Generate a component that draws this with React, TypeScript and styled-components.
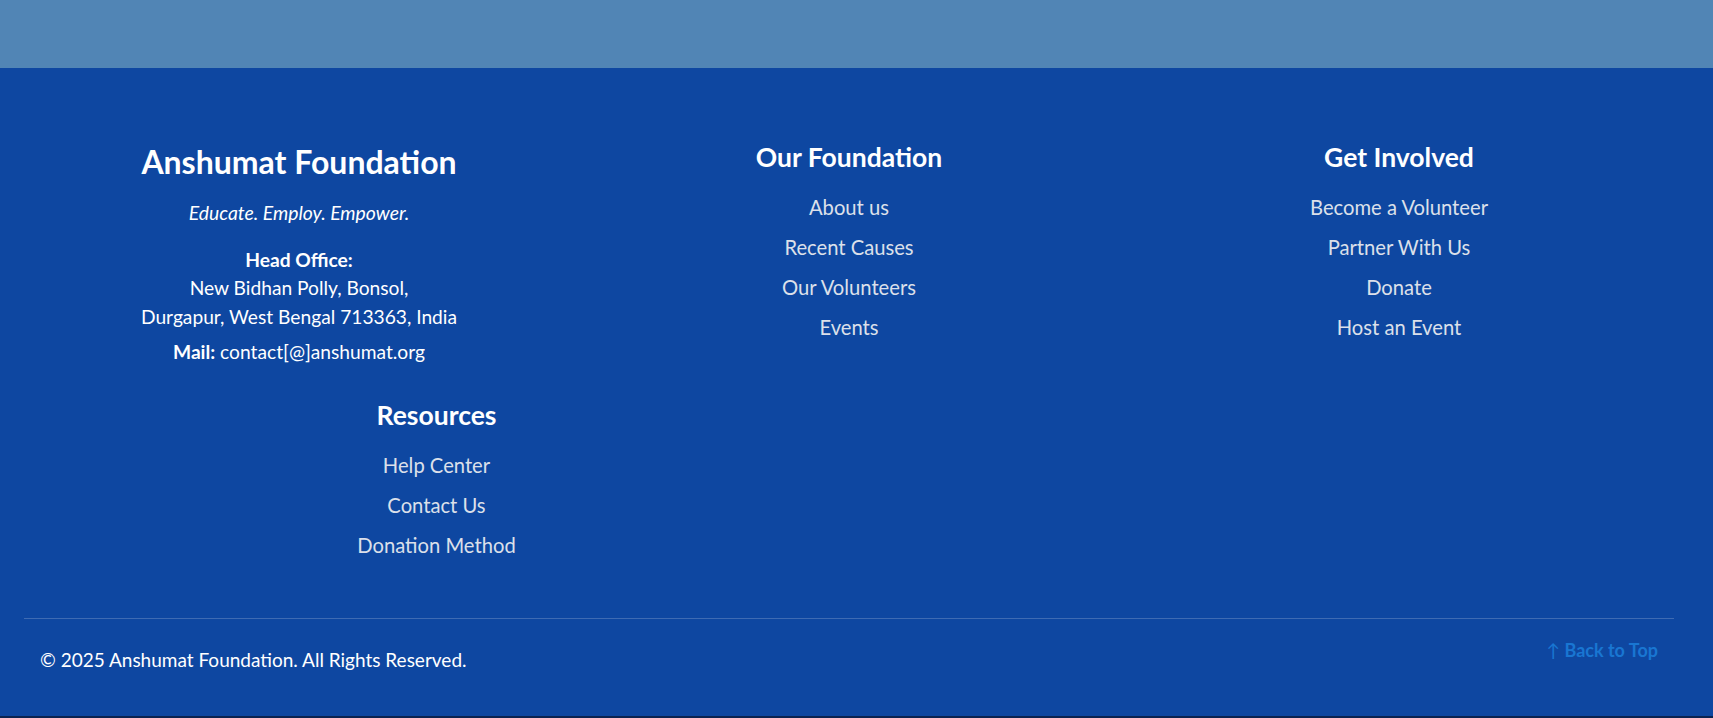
import React from 'react';
import styled, { createGlobalStyle } from 'styled-components';

const Global = createGlobalStyle`
  html, body { margin: 0; padding: 0; background: #0a2351; }
  body { font-family: Lato, "Liberation Sans", sans-serif; }
  * { box-sizing: border-box; }
`;

const Band = styled.div`
  height: 68px;
  background: #5185b5;
`;

const Footer = styled.footer`
  background: #0e47a1;
  color: #ffffff;
  padding: 73.8px 39px 43.4px 24px;
`;

const TopRow = styled.div`
  display: grid;
  grid-template-columns: 1fr 1fr 1fr;
  align-items: start;
`;

const SecondRow = styled.div`
  display: grid;
  grid-template-columns: 1fr 1fr;
  margin-top: 33.4px;
`;

const BrandCol = styled.div`
  display: flex;
  flex-direction: column;
  align-items: center;
  text-align: center;
`;

const BrandTitle = styled.h2`
  margin: 1.6px 0 0;
  font-size: 32px;
  font-weight: 700;
  line-height: 1.2;
`;

const Tagline = styled.p`
  margin: 17.2px 0 0;
  font-size: 19.4px;
  font-style: italic;
  line-height: 27px;
`;

const InfoText = styled.p<{ $gap: number }>`
  margin: ${(p) => p.$gap}px 0 0;
  font-size: 19.2px;
  line-height: 28.5px;
`;

const LinkCol = styled.div`
  display: flex;
  flex-direction: column;
  align-items: center;
  text-align: center;
`;

const ColTitle = styled.h3`
  margin: 0;
  font-size: 26.5px;
  font-weight: 700;
  line-height: 1.2;
`;

const LinkList = styled.ul`
  list-style: none;
  margin: 21.7px 0 0;
  padding: 0;
  display: flex;
  flex-direction: column;
  align-items: center;
  gap: 16px;
`;

const LinkItem = styled.a`
  display: block;
  font-size: 20.2px;
  line-height: 24px;
  color: #dce0ea;
  text-decoration: none;
`;

const Divider = styled.hr`
  margin: 60.7px 0 0;
  border: 0;
  border-top: 1px solid rgba(255, 255, 255, 0.2);
`;

const BottomBar = styled.div`
  display: flex;
  justify-content: space-between;
  align-items: flex-start;
  padding: 0 16px;
`;

const Copyright = styled.p`
  margin: 26.6px 0 0;
  font-size: 19px;
  line-height: 27px;
`;

const BackToTop = styled.a`
  margin-top: 18.5px;
  font-size: 18px;
  font-weight: 700;
  line-height: 27px;
  color: #1976d2;
  text-decoration: none;
`;

const Arrow = styled.span`
  font-weight: 400;
`;

type Section = { title: string; links: string[] };

const foundation: Section = {
  title: 'Our Foundation',
  links: ['About us', 'Recent Causes', 'Our Volunteers', 'Events'],
};
const involved: Section = {
  title: 'Get Involved',
  links: ['Become a Volunteer', 'Partner With Us', 'Donate', 'Host an Event'],
};
const resources: Section = {
  title: 'Resources',
  links: ['Help Center', 'Contact Us', 'Donation Method'],
};

function LinkSection({ section }: { section: Section }) {
  return (
    <LinkCol>
      <ColTitle>{section.title}</ColTitle>
      <LinkList>
        {section.links.map((l) => (
          <li key={l}>
            <LinkItem href="#">{l}</LinkItem>
          </li>
        ))}
      </LinkList>
    </LinkCol>
  );
}

export default function App() {
  return (
    <>
      <Global />
      <Band />
      <Footer>
        <TopRow>
          <BrandCol>
            <BrandTitle>Anshumat Foundation</BrandTitle>
            <Tagline>Educate. Employ. Empower.</Tagline>
            <InfoText $gap={19.9}>
              <strong>Head Office:</strong>
              <br />
              New Bidhan Polly, Bonsol,
              <br />
              Durgapur, West Bengal 713363, India
            </InfoText>
            <InfoText $gap={6.5}>
              <strong>Mail:</strong> contact[@]anshumat.org
            </InfoText>
          </BrandCol>
          <LinkSection section={foundation} />
          <LinkSection section={involved} />
        </TopRow>
        <SecondRow>
          <LinkSection section={resources} />
        </SecondRow>
        <Divider />
        <BottomBar>
          <Copyright>© 2025 Anshumat Foundation. All Rights Reserved.</Copyright>
          <BackToTop href="#">
            <Arrow>↑</Arrow> Back to Top
          </BackToTop>
        </BottomBar>
      </Footer>
    </>
  );
}
